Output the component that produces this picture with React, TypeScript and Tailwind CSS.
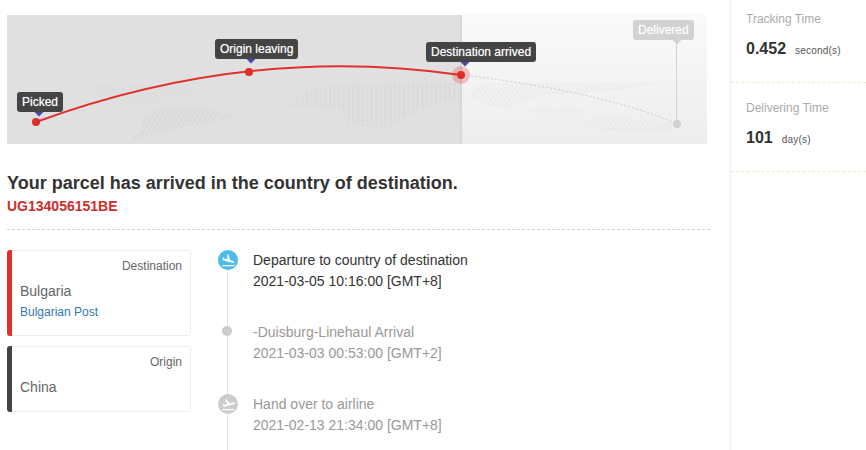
import { MdFlightLand, MdFlightTakeoff } from "react-icons/md";

const font = { fontFamily: '"Liberation Sans", Arial, sans-serif' };

function Tip({ label, cls, pin, bg }: { label: string; cls: string; pin: string; bg: string }) {
  return (
    <div className={`absolute h-5 ${cls}`}>
      <span className={`absolute -bottom-[3px] h-[7px] w-[7px] -translate-x-1/2 rotate-45 ${pin}`} />
      <div className={`relative h-5 rounded-[3px] px-[5px] text-xs leading-5 text-white [text-shadow:0_0_1px_rgba(255,255,255,0.55)] ${bg}`}>
        {label}
      </div>
    </div>
  );
}

function MapArt() {
  return (
    <svg className="absolute inset-0 h-full w-full" viewBox="0 0 700 129" fill="none">
      <defs>
        <pattern id="dk" width="4.5" height="4" patternUnits="userSpaceOnUse" patternTransform="skewX(-30)">
          <rect width="2.4" height="3.4" fill="#d4d4d4" />
        </pattern>
        <pattern id="dk2" width="4.6" height="4" patternUnits="userSpaceOnUse">
          <rect width="2.4" height="3.4" fill="#d5d5d5" />
        </pattern>
        <pattern id="lt" width="4.5" height="4" patternUnits="userSpaceOnUse" patternTransform="skewX(35)">
          <rect width="2.4" height="3.4" fill="#e8e8e8" />
        </pattern>
        <filter id="soft" x="-5%" y="-5%" width="110%" height="110%">
          <feGaussianBlur stdDeviation="0.6" />
        </filter>
      </defs>
      <g filter="url(#soft)">
        <path d="M60 70 L120 69 L210 75 L153 85 L133 93 L96 80Z" fill="url(#dk)" opacity=".35" />
        <path d="M136 102 L153 93 L196 93 L230 102 L203 108 L153 117 L120 128 L135 116Z" fill="url(#dk)" opacity=".6" />
        <path d="M280 92 L300 75 L330 70 L450 68 L450 83 L400 100 L383 113 L340 110 L333 93Z" fill="url(#dk2)" opacity=".6" />
        <path d="M463 80 L473 68 L660 68 L596 77 L533 80 L503 93 L476 90Z" fill="url(#lt)" opacity=".7" />
        <path d="M516 93 L576 93 L576 100 L533 100Z" fill="url(#lt)" opacity=".5" />
        <path d="M570 108 L596 102 L663 107 L666 117 L596 115Z" fill="url(#lt)" opacity=".9" />
      </g>
      <path d="M464 61 C 520 68 610 82 670 109" stroke="#cdcdcd" strokeWidth="1" strokeDasharray="2 2" />
      <path d="M669.5 26 L669.5 109" stroke="#d2d2d2" strokeWidth="1" />
      <path d="M29 107 Q 242.5 29 454 60" stroke="#e0302c" strokeWidth="2" />
      <circle cx="29" cy="107" r="4" fill="#e02b27" />
      <circle cx="242" cy="57" r="4" fill="#e02b27" />
      <circle cx="454" cy="60" r="9" fill="#e02b27" opacity=".25" />
      <circle cx="454" cy="60" r="4" fill="#e02b27" />
      <circle cx="670" cy="109" r="4" fill="#d2d2d2" />
    </svg>
  );
}

function Card({ color, label, country, carrier, h }: { color: string; label: string; country: string; carrier?: string; h: string }) {
  return (
    <div className={`flex w-[184px] overflow-hidden rounded-[3px] ${h}`}>
      <div className={`w-[5px] shrink-0 ${color}`} />
      <div className="flex-1 rounded-r-[3px] border border-l-0 border-[#eeeeee] pt-[7px] pr-2 pl-2 text-[#666666]">
        <div className="text-right text-xs leading-[17px]">{label}</div>
        <div className="mt-[6px] text-sm leading-5">{country}</div>
        {carrier && <div className="mt-[1px] text-xs leading-[20px] text-[#337ab7]">{carrier}</div>}
      </div>
    </div>
  );
}

function Step({ icon, title, time, active }: { icon: React.ReactNode; title: string; time: string; active?: boolean }) {
  return (
    <div className="flex h-[72px] gap-[15px]">
      <div className="relative w-5 shrink-0">
        <div className="absolute top-0 bottom-0 left-[9px] w-px bg-[#e2e2e2]" />
        <div className="relative">{icon}</div>
      </div>
      <div className={`text-sm leading-[21px] ${active ? "text-[#333333]" : "text-[#999999]"}`}>
        <div>{title}</div>
        <div>{time}</div>
      </div>
    </div>
  );
}

function Stat({ label, value, unit }: { label: string; value: string; unit: string }) {
  return (
    <div className="h-[71px] border-b border-dashed border-[#ebebc4] pl-[15px]">
      <div className="text-xs leading-[14px] text-[#aaaaaa]">{label}</div>
      <div className="mt-[13px] flex items-baseline text-[#333333]">
        <span className="text-base font-bold leading-[20px]">{value}</span>
        <span className="ml-[9px] text-[10px] tracking-[0.2px] text-[#555555]">{unit}</span>
      </div>
    </div>
  );
}

export default function App() {
  return (
    <div className="flex h-[450px] w-[866px] overflow-hidden bg-white" style={font}>
      <main className="w-[730px] shrink-0 pt-[15px] pl-[7px]">
        <div className="relative flex h-[129px] w-[700px] overflow-hidden">
          <div className="w-[455px] bg-[#e0e0e0]" />
          <div className="flex-1 bg-gradient-to-b from-[#fafafa] to-[#ededed] shadow-[-1px_0_2px_rgba(0,0,0,0.08)]" />
          <MapArt />
          <Tip label="Picked" cls="left-[10px] top-[77px]" bg="bg-[#444444]" pin="left-[22px] bg-[#4a4aa8]" />
          <Tip label="Origin leaving" cls="left-[208px] top-[24px]" bg="bg-[#444444]" pin="left-[36px] bg-[#4a4aa8]" />
          <Tip label="Destination arrived" cls="left-[419px] top-[27px]" bg="bg-[#444444]" pin="left-[39px] bg-[#4a4aa8]" />
          <Tip label="Delivered" cls="left-[626px] top-[5px]" bg="bg-[#d2d2d2]" pin="left-[44px] bg-[#d2d2d2]" />
        </div>
        <h1 className="mt-[28px] text-lg font-bold leading-[22px] text-[#333333]">Your parcel has arrived in the country of destination.</h1>
        <div className="mt-[3px] text-sm font-bold leading-[18px] text-[#c9302c]">UG134056151BE</div>
        <div className="mt-[14px] w-[703px] border-t border-dashed border-[#d5d5d5]" />
        <div className="mt-[20px] flex">
          <div className="flex w-[211px] shrink-0 flex-col gap-[10px]">
            <Card color="bg-[#e0302c]" label="Destination" country="Bulgaria" carrier="Bulgarian Post" h="h-[86px]" />
            <Card color="bg-[#444444]" label="Origin" country="China" h="h-[66px]" />
          </div>
          <div className="w-[480px]">
            <Step
              active
              title="Departure to country of destination"
              time="2021-03-05 10:16:00 [GMT+8]"
              icon={<span className="flex h-5 w-5 items-center justify-center rounded-full bg-[#4dbce9] text-white"><MdFlightLand size={15} /></span>}
            />
            <Step
              title="-Duisburg-Linehaul Arrival"
              time="2021-03-03 00:53:00 [GMT+2]"
              icon={<span className="mt-[4px] ml-[4px] block h-[10px] w-[10px] rounded-full bg-[#cccccc]" />}
            />
            <Step
              title="Hand over to airline"
              time="2021-02-13 21:34:00 [GMT+8]"
              icon={<span className="flex h-5 w-5 items-center justify-center rounded-full bg-[#cccccc] text-white"><MdFlightTakeoff size={15} /></span>}
            />
          </div>
        </div>
      </main>
      <aside className="flex-1 border-l border-[#eeeeee] pt-[12px]">
        <Stat label="Tracking Time" value="0.452" unit="second(s)" />
        <div className="mt-[18px]">
          <Stat label="Delivering Time" value="101" unit="day(s)" />
        </div>
      </aside>
    </div>
  );
}
